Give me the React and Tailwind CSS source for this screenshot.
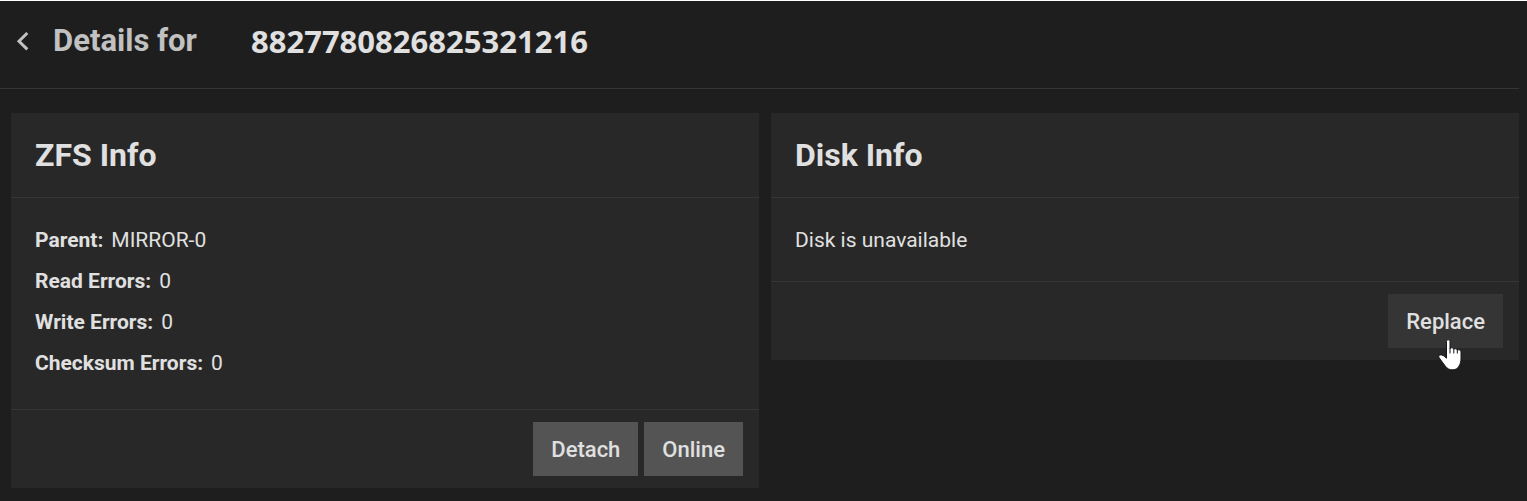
const zfsStats = [
  { label: 'Parent', value: 'MIRROR-0' },
  { label: 'Read Errors', value: '0' },
  { label: 'Write Errors', value: '0' },
  { label: 'Checksum Errors', value: '0' },
];

function Card({ title, actions, children }) {
  return (
    <section className="min-w-0 flex-1 bg-[#282828]">
      <header className="border-b border-[#353535] px-6 py-5">
        <h2 className="text-[32px] leading-[44px] font-bold">{title}</h2>
      </header>
      <div className="border-b border-[#353535] px-6 pt-[25px] pb-[23px] text-[21px] leading-[35px]">{children}</div>
      <footer className="flex justify-end gap-1.5 px-4 py-3">{actions}</footer>
    </section>
  );
}

function ActionButton({ className, children }) {
  return (
    <button
      type="button"
      className={`h-[54px] cursor-pointer px-[18px] text-[22px] font-medium ${className}`}
    >
      {children}
    </button>
  );
}

function HandCursor() {
  return (
    <svg
      className="pointer-events-none absolute top-[45px] right-[41px] h-8 w-6"
      viewBox="0 0 24 32"
      fill="#fff"
      stroke="#15151f"
      strokeWidth="1"
      strokeLinejoin="round"
      aria-hidden="true"
    >
      <path d="M8.5 2.5C8.5 1.4 9.2.8 10.2.8s1.8.6 1.8 1.7v7c.4-.5 1-.7 1.7-.7 1 0 1.9.6 2.1 1.4.4-.3.9-.5 1.5-.5 1 0 1.8.6 2 1.5.4-.3.8-.4 1.3-.4 1.5 0 2.4 1 2.4 2.4v6.3c0 3.4-.8 5.5-1.9 7.5-1.3 2.6-3.6 3.8-6.6 3.8-3.3 0-5.3-1.2-7.3-3.9L1.3 19c-.9-1.3-.6-2.2.1-2.7 1.5-.9 3.5-.2 4.8.9l2.3 2V2.500z" />
      <path d="M12 9v5.5M15.8 10v4.5M19.3 11v3.5" fill="none" />
    </svg>
  );
}

export default function App() {
  return (
    <div className="min-h-screen border-t border-white bg-[#1e1e1e] pr-2 font-[Roboto,sans-serif] text-[#e0e0e0]">
      <header className="flex h-22 items-center border-b border-[#353535] pb-1.5 pl-4">
        <button type="button" aria-label="Back" className="cursor-pointer text-[#c1c1c1]">
          <svg className="h-5 w-3.5" viewBox="0 0 14 20" fill="none" stroke="currentColor" strokeWidth="3">
            <path d="M11.3 1 3 9.2l8.3 8.2" />
          </svg>
        </button>
        <h1 className="flex items-center text-[31px] font-bold">
          <span className="ml-[23px] text-[#c1c1c1]">Details for</span>
          <span className="ml-[54px] font-['Noto_Sans',sans-serif]">8827780826825321216</span>
        </h1>
      </header>

      <main className="flex flex-wrap items-start gap-3 pt-6 pb-3 pl-[11px]">
        <Card
          title="ZFS Info"
          actions={
            <>
              <ActionButton className="bg-[#545454]">Detach</ActionButton>
              <ActionButton className="bg-[#545454]">Online</ActionButton>
            </>
          }
        >
          <ul className="mb-[5px] flex flex-col gap-1.5">
            {zfsStats.map((s) => (
              <li key={s.label} className="flex gap-2">
                <strong className="font-bold">{s.label}:</strong>
                <span>{s.value}</span>
              </li>
            ))}
          </ul>
        </Card>

        <Card
          title="Disk Info"
          actions={
            <div className="relative flex">
              <ActionButton className="bg-[#353535]">Replace</ActionButton>
              <HandCursor />
            </div>
          }
        >
          <p>Disk is unavailable</p>
        </Card>
      </main>
    </div>
  );
}
